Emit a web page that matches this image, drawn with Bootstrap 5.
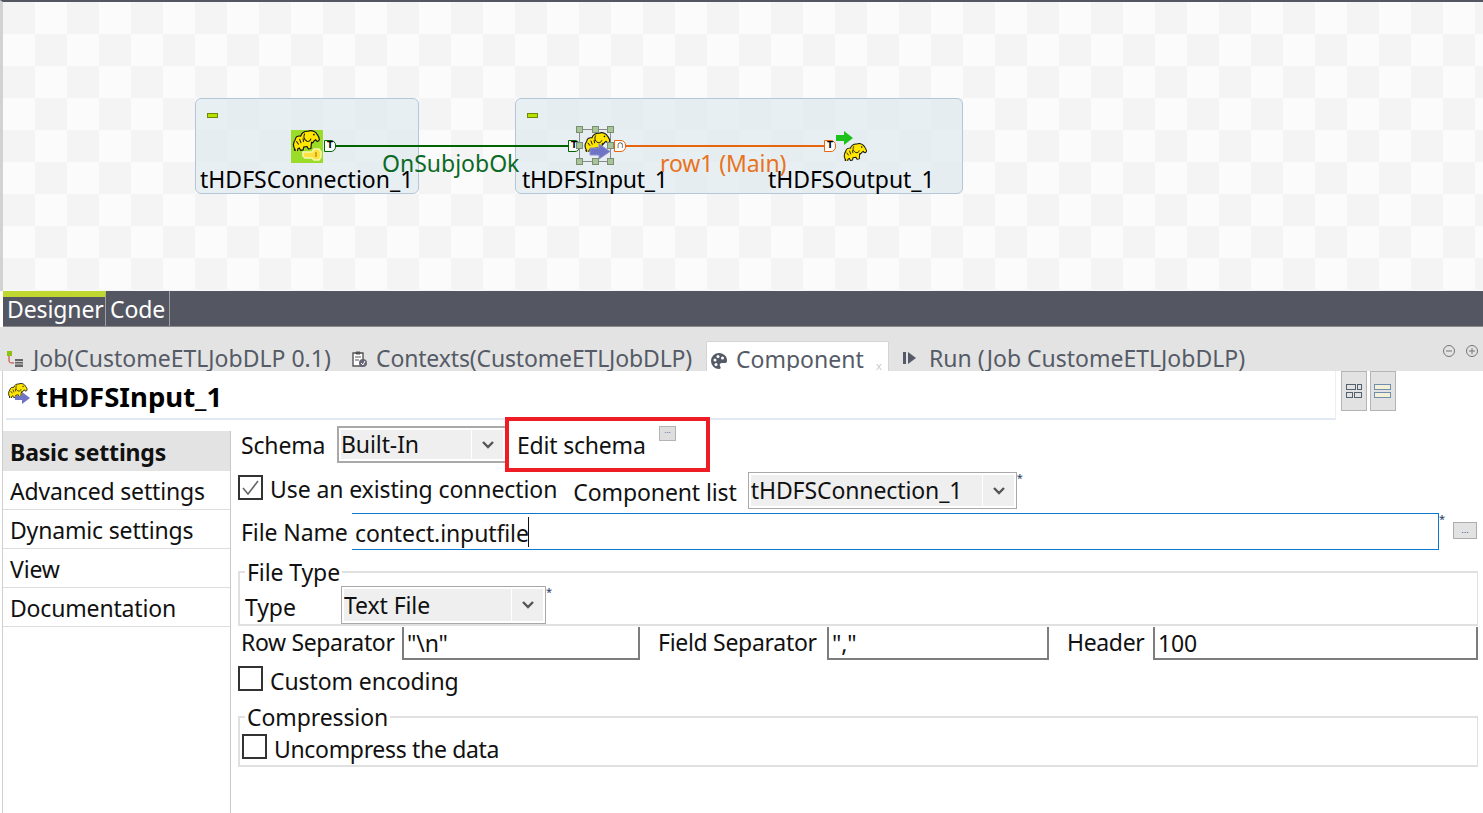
<!DOCTYPE html>
<html lang="en">
<head>
    <meta charset="UTF-8">
    <meta name="viewport" content="width=device-width, initial-scale=1">
    <title>tHDFSInput_1 - Component</title>
    <link href="https://cdn.jsdelivr.net/npm/bootstrap@5.3.2/dist/css/bootstrap.min.css" rel="stylesheet">
    <script src="https://cdn.jsdelivr.net/npm/bootstrap@5.3.2/dist/js/bootstrap.bundle.min.js"></script>
    <style>
        html, body { height: 813px; overflow: hidden; }
        body { font-family: "Noto Sans", "Open Sans", sans-serif; font-size: 23px; letter-spacing: -.1px; color: #111; background: #fff; }

        /* designer canvas */
        .job-canvas { position: relative; height: 291px; border-left: 3px solid #d2d2d2; border-top: 2px solid #545762;
            background: repeating-conic-gradient(#fbfbfb 0 25%, #f4f4f4 0 50%) 0 0 / 64px 64px; }
        .subjob { position: absolute; top: 96px; height: 96px; background: rgba(224, 234, 240, .72); border: 1px solid #b4c7d8; border-radius: 6px; }
        .subjob-a { left: 192px; width: 224px; }
        .subjob-b { left: 512px; width: 448px; }
        .collapse-mark { position: absolute; left: 11px; top: 14px; width: 11px; height: 5px; background: #b7e000; border: 1px solid #6f8a00; }
        .canvas-text { position: absolute; line-height: 30px; white-space: nowrap; letter-spacing: 0; }
        .node-name { top: 162px; color: #000; }
        .name-a { left: 197px; }
        .name-b { left: 519px; letter-spacing: -.25px; }
        .name-c { left: 765px; letter-spacing: -.05px; }
        .link-ok { top: 146px; left: 379px; color: #0b6a25; }
        .link-main { top: 146px; left: 657px; color: #e9731d; letter-spacing: -.1px; }
        .conn-line { position: absolute; top: 143px; height: 2px; }
        .conn-ok { left: 331px; width: 236px; background: #006400; }
        .conn-main { left: 616px; width: 206px; background: #e8650f; }
        .conn-port { position: absolute; top: 138px; width: 12px; height: 12px; background: #fff; border: 1.5px solid #006400; border-radius: 0 5px 5px 0; font: 700 11px/9px "Liberation Mono", monospace; letter-spacing: 0; text-align: center; color: #000; }
        .port-orange { border-color: #e8650f; }
        .port-a { left: 321px; }
        .port-b { left: 565px; }
        .port-c { left: 611px; }
        .port-d { left: 821px; }
        .node-icon { position: absolute; }
        .icon-conn { left: 288px; top: 128px; }
        .icon-input { left: 577px; top: 128px; }
        .icon-out-arrow { left: 833px; top: 129px; }
        .icon-out-hadoop { left: 840px; top: 140px; }
        .sel-box { position: absolute; left: 576px; top: 127px; width: 32px; height: 33px; border: 1px solid #8a8a8a; }
        .sel-handle { position: absolute; width: 7px; height: 7px; background: #a7c596; border: 1px solid #7d8d75; }
        .hx-1 { left: 573px; } .hx-2 { left: 589px; } .hx-3 { left: 604px; }
        .hy-1 { top: 124px; } .hy-2 { top: 140px; } .hy-3 { top: 156px; }

        /* Designer / Code strip */
        .editor-tabs { height: 36px; margin-left: 3px; background: #545762; color: #fff; border-bottom: 1px solid #8a8a8a; }
        .editor-tab { height: 35px; padding: 6px 3px 0 4px; line-height: 25px; border-right: 1px solid #a0a0a0; }
        .editor-tab.is-on { width: 103px; border-top: 6px solid #c0d72f; padding-top: 0; }
        .editor-tab.is-off { width: 64px; }

        /* view tabs */
        .view-tabs { position: relative; height: 44px; background: #e3e3e3; color: #555b66; overflow: hidden; padding-left: 7px; }
        .view-tab { height: 30px; margin-top: 14px; line-height: 34px; white-space: nowrap; letter-spacing: 0; }
        .view-tab.is-on { background: #fff; border: 1px solid #d4d4d4; border-bottom: 0; border-radius: 2px 2px 0 0; }
        .tab-ico { flex: none; margin-top: 10px; }
        .tab-1 { width: 344px; }
        .tab-2 { width: 355px; letter-spacing: -.15px; }
        .tab-3 { width: 183px; padding-left: 3px; }
        .tab-4 { margin-left: 13px; gap: 12px; }
        .tab-x { position: absolute; left: 876px; top: 34px; font-size: 11px; line-height: 10px; color: #ccc; }
        .view-ctl { position: absolute; top: 17px; left: 1441px; }

        /* title */
        .title-row { height: 60px; margin-left: 2px; padding-left: 3px; border-left: 1px solid #cfcfcf; }
        .title-box { width: 1330px; height: 49px; border-right: 1px solid #eee; border-bottom: 2px solid #e2e9f2; font-size: 27.5px; font-weight: 700; letter-spacing: 0; color: #000; line-height: 52px; }
        .title-ico { flex: none; margin-top: 8px; margin-right: 1px; }
        .layout-btn { width: 26px; height: 40px; margin-left: 5px; background: #e2e2e2; border: 1px solid #b4b4b4; }
        .layout-btn + .layout-btn { margin-left: 3px; }

        /* side list */
        .prop-main { height: 382px; margin-left: 2px; border-left: 1px solid #cfcfcf; }
        .side-list { width: 228px; flex: none; border-right: 1px solid #c8c8c8; border-radius: 0; }
        .side-list .list-group-item { height: 39px; padding: 0 0 0 7px; line-height: 40px; font-size: 23px; letter-spacing: -.17px; color: #111; border: 0; border-bottom: 1px solid #ddd; border-radius: 0; background: transparent; }
        .side-list .list-group-item.active { height: 40px; background: #e3e3e3; font-weight: 700; color: #111; line-height: 42px; border-bottom: 0; }

        /* form */
        .prop-form { position: relative; flex: 1; padding-left: 10px; margin-top: -5px; }
        .form-line { white-space: nowrap; }
        .field-label { line-height: 30px; }
        .combo.form-select { height: 37px; padding: 0 0 0 2px; font-size: 23px; letter-spacing: -.1px; line-height: 31px; color: #111; border: 1px solid #a9a9a9; border-radius: 0;
            box-shadow: inset 0 0 0 2px #fff;
            background-color: #efefef;
            background-image: url("data:image/svg+xml,%3Csvg xmlns='http://www.w3.org/2000/svg' width='12' height='8'%3E%3Cpath d='M1 1l5 5 5-5' fill='none' stroke='%23555' stroke-width='2.4'/%3E%3C/svg%3E"), linear-gradient(#fff, #fff);
            background-repeat: no-repeat;
            background-position: right 11px center, right 33px top;
            background-size: 12px 8px, 1px 100%; }
        .req-star { font-size: 11px; line-height: 12px; color: #1d3a66; align-self: flex-start; }
        .plain-input.form-control { height: 100%; padding: 0 0 0 3px; font-size: 23px; letter-spacing: -.1px; line-height: 28px; color: #111; border: 2px solid #7d7d7d; border-top: 0; border-radius: 0; box-shadow: none; background: #fff; }
        .file-input.form-control { height: 37px; padding: 2px 0 0 3px; font-size: 23px; letter-spacing: -.1px; color: #111; border: 1px solid #0a78d0; border-left: 0; border-radius: 0; box-shadow: none;
            background: linear-gradient(#111, #111) no-repeat 176px 3px / 1px 30px; }
        .dots-btn { width: 24px; height: 17px; padding: 0; background: #e2e2e2; border: 1px solid #adadad; border-radius: 0; font: 9px/10px "Liberation Sans", sans-serif; color: #2a4a80; }
        .dots-btn:hover { background: #e2e2e2; border-color: #adadad; color: #2a4a80; }
        .box-check.form-check-input { width: 25px; height: 25px; margin: 0; flex: none; border: 2px solid #333; border-radius: 0; background-color: #fff; box-shadow: none; float: none; }
        .box-check.form-check-input:checked { background-color: #fff; border-color: #333; background-size: 21px 21px;
            background-image: url("data:image/svg+xml,%3Csvg xmlns='http://www.w3.org/2000/svg' viewBox='0 0 21 21'%3E%3Cpath d='M3 11l5 6 10-13' fill='none' stroke='%23666' stroke-width='1.6'/%3E%3C/svg%3E"); }
        .group-box { min-width: 0; margin: 0; border: 2px solid #e0e0e0; border-right-width: 1px; border-radius: 0; }
        .group-box legend { float: none; width: auto; margin: 0 0 0 5px; padding: 0 2px; font-size: 23px; line-height: 22px; color: #111; }
        .annot-box { position: absolute; left: 274px; top: -9px; width: 205px; height: 55px; border: 4px solid #ee1c25; pointer-events: none; }
        .annot-btn { position: absolute; left: 428px; top: 0; width: 17px; height: 15px; background: #dedede; border: 1px solid #b4b4b4; font: 8px/8px "Liberation Sans", sans-serif; color: #2a4a80; text-align: center; }

        /* form line positions */
        .sch-line { height: 37px; }
        .sch-label { width: 96px; letter-spacing: -.15px; }
        .sch-combo.form-select { width: 170px; flex: none; border-width: 2px; }
        .sch-edit { margin-left: 10px; letter-spacing: -.2px; }
        .conn-row { height: 37px; margin-top: 9px; margin-left: -3px; align-items: center; }
        .conn-row .box-check { margin-top: -6px; }
        .conn-row .conn-label { margin-top: -4px; margin-left: 7px; }
        .conn-label { margin-left: 6px; }
        .comp-label { margin-left: 16px; margin-top: 3px; }
        .comp-combo.form-select { width: 269px; flex: none; margin-left: 11px; }
        .file-row { height: 37px; margin-top: 4px; align-items: center; }
        .file-label { width: 111px; flex: none; }
        .file-input.form-control { width: 1087px; flex: none; }
        .file-row .dots-btn { margin-left: 8px; margin-top: -3px; }
        .type-group { margin: 11px 5px 0 -3px; height: 65px; padding: 0; }
        .type-group .d-flex { margin-top: 3px; }
        .type-label { width: 96px; margin-left: 5px; margin-top: 6px; }
        .type-combo.form-select { width: 205px; flex: none; height: 38px; }
        .sep-row { height: 33px; margin-top: 1px; margin-right: 5px; align-items: stretch; }
        .sep-a { width: 161px; flex: none; letter-spacing: -.35px; }
        .sep-input-a.form-control { width: 238px; flex: none; }
        .sep-b { margin-left: 18px; width: 169px; flex: none; letter-spacing: -.3px; }
        .sep-input-b.form-control { width: 222px; flex: none; }
        .sep-c { margin-left: 18px; width: 86px; flex: none; letter-spacing: -.35px; }
        .sep-input-c.form-control { flex: 1; }
        .enc-row { height: 26px; margin-top: 7px; margin-left: -3px; align-items: center; }
        .enc-row .box-check { margin-top: -3px; }
        .enc-row .conn-label { margin-top: 1px; margin-left: 7px; }
        .comp-group { margin: 13px 5px 0 -3px; height: 61px; padding: 0; }
        .comp-group .d-flex { padding-left: 2px; margin-top: 6px; }
        .comp-group .conn-label { margin-left: 7px; letter-spacing: -.33px; }
    </style>
</head>
<body>

    <svg width="0" height="0" class="d-block">
        <defs>
            <symbol id="hadoop" viewBox="0 0 32 24">
                <g transform="rotate(-10 16 12)">
                    <path d="M2 20c-2-4-1-8 2-11 1-3 4-4 7-3 1-3 5-5 9-4 5-1 9 2 10 6 1 2 2 4 1 6-1 1-1 2-3 1l-1-2-2 1-2 2-1-1-1 3-1 4-3 0-1-3h-4l-1 3-3 0-1-3-2 1-1 3c-1 0-2-1-3-3z" fill="#ffe600" stroke="#111" stroke-width="1.3" stroke-linejoin="round"/>
                    <path d="M16 4c-2 2-3 6 1 9 2 1 4 0 5-2M5 11l2 4M9 9l1 5M13 9l0 4" fill="none" stroke="#111" stroke-width="1.1"/>
                    <circle cx="26" cy="7" r="1" fill="#111"/>
                </g>
            </symbol>
        </defs>
    </svg>

    <div class="job-canvas">
        <div class="subjob subjob-a"><span class="collapse-mark"></span></div>
        <div class="subjob subjob-b"><span class="collapse-mark"></span></div>

        <div class="conn-line conn-ok"></div>
        <div class="conn-line conn-main"></div>

        <!-- tHDFSConnection -->
        <svg class="node-icon icon-conn" width="32" height="33" viewBox="0 0 32 33">
            <rect width="32" height="33" fill="#9bdc28"/>
            <use href="#hadoop" x="1" y="0" width="28" height="21"/>
            <path d="M14 22h7l2-3h5l2 3v5l-2 3h-5l-2-2h-7l-2-2v-4z" fill="#ffe040" stroke="#f6f7a8" stroke-width="1.6"/>
            <path d="M25 22v5" stroke="#b99b00" stroke-width="1.5"/>
        </svg>
        <span class="conn-port port-a">T</span>
        <span class="conn-port port-b">T</span>

        <!-- tHDFSInput -->
        <span class="sel-box"></span>
        <svg class="node-icon icon-input" width="34" height="34" viewBox="0 0 34 34">
            <use href="#hadoop" x="3" y="2" width="28" height="20"/>
            <path d="M10 18h9v-4l11 7.500-11 7.500v-4H10z" fill="#6f74c4" stroke="#8d90d0"/>
        </svg>
        <span class="sel-handle hx-1 hy-1"></span>
        <span class="sel-handle hx-2 hy-1"></span>
        <span class="sel-handle hx-3 hy-1"></span>
        <span class="sel-handle hx-1 hy-2"></span>
        <span class="sel-handle hx-3 hy-2"></span>
        <span class="sel-handle hx-1 hy-3"></span>
        <span class="sel-handle hx-2 hy-3"></span>
        <span class="sel-handle hx-3 hy-3"></span>
        <span class="conn-port port-c port-orange">∩</span>
        <span class="conn-port port-d port-orange">T</span>

        <!-- tHDFSOutput -->
        <svg class="node-icon icon-out-arrow" width="18" height="15" viewBox="0 0 18 15">
            <path d="M0 4h8V0l9 7-9 7v-4H0z" fill="#1cc11c"/>
        </svg>
        <svg class="node-icon icon-out-hadoop" width="24" height="20" viewBox="0 0 32 24"><use href="#hadoop"/></svg>

        <span class="canvas-text node-name name-a">tHDFSConnection_1</span>
        <span class="canvas-text node-name name-b">tHDFSInput_1</span>
        <span class="canvas-text node-name name-c">tHDFSOutput_1</span>
        <span class="canvas-text link-ok">OnSubjobOk</span>
        <span class="canvas-text link-main">row1 (Main)</span>
    </div>

    <div class="editor-tabs d-flex">
        <div class="editor-tab is-on">Designer</div>
        <div class="editor-tab is-off">Code</div>
    </div>

    <div class="view-tabs d-flex">
        <div class="view-tab tab-1 d-flex gap-2">
            <svg class="tab-ico" width="18" height="17" viewBox="0 0 18 17">
                <rect x="0" y="0" width="5" height="5" fill="#8fbf10"/>
                <path d="M2 5v5c0 2 2 2 5 2" fill="none" stroke="#c0392b"/>
                <path d="M8 8h8v8H8z" fill="#666"/>
                <path d="M8 10.500h8M8 13h8" stroke="#e3e3e3" stroke-width=".8"/>
            </svg>
            <span>Job(CustomeETLJobDLP 0.1)</span>
        </div>
        <div class="view-tab tab-2 d-flex gap-2">
            <svg class="tab-ico" width="17" height="17" viewBox="0 0 17 17">
                <path d="M2 2h10v13H2z" fill="#fff" stroke="#555" stroke-width="1.4"/>
                <path d="M5 1h4v2H5zM4 6h6M4 9h4" fill="#555" stroke="#555"/>
                <circle cx="12" cy="12" r="4" fill="#667"/>
                <path d="M10 12l2 2 2-4" fill="none" stroke="#fff"/>
            </svg>
            <span>Contexts(CustomeETLJobDLP)</span>
        </div>
        <div class="view-tab tab-3 is-on d-flex gap-2">
            <svg class="tab-ico" width="18" height="18" viewBox="0 0 18 18">
                <path d="M9 1a8 8 0 1 0 0 16c2 0 2-2 1-3s0-3 2-3h3c2 0 2-2 2-3 0-4-4-7-8-7z" fill="#555b66"/>
                <circle cx="5" cy="8" r="1.500" fill="#fff"/><circle cx="8" cy="4.500" r="1.500" fill="#fff"/><circle cx="12.500" cy="6" r="1.500" fill="#fff"/><circle cx="6" cy="12.500" r="1.500" fill="#fff"/>
            </svg>
            <span>Component</span>
        </div>
        <div class="view-tab tab-4 d-flex">
            <svg class="tab-ico" width="15" height="14" viewBox="0 0 15 14">
                <path d="M1 1h3v12H1z" fill="#555b66"/><path d="M6 1l8 6-8 6z" fill="#555b66"/>
            </svg>
            <span>Run (Job CustomeETLJobDLP)</span>
        </div>
        <span class="tab-x">x</span>
        <svg class="view-ctl" width="38" height="14" viewBox="0 0 38 14" fill="none" stroke="#777">
            <circle cx="8" cy="7" r="5.500"/><path d="M5 7h6"/>
            <circle cx="31" cy="7" r="5.500"/><path d="M28 7h6M31 4v6"/>
        </svg>
    </div>

    <div class="title-row d-flex">
        <div class="title-box d-flex align-items-start gap-1">
            <svg class="title-ico" width="25" height="28" viewBox="0 0 25 28">
                <use href="#hadoop" x="0" y="4" width="23" height="15"/>
                <path d="M9 17h7v-4l8 6-8 6v-4H9z" fill="#6f74c4"/>
            </svg>
            <span>tHDFSInput_1</span>
        </div>
        <div class="layout-btn d-flex align-items-center justify-content-center">
            <svg width="16" height="14" viewBox="0 0 16 14" fill="none" stroke="#55606e">
                <rect x=".5" y=".5" width="9" height="5"/><rect x="11.500" y=".5" width="4" height="5"/>
                <rect x=".5" y="8.500" width="6" height="5"/><rect x="8.500" y="8.500" width="7" height="5"/>
            </svg>
        </div>
        <div class="layout-btn d-flex align-items-center justify-content-center">
            <svg width="18" height="14" viewBox="0 0 18 14" fill="#f4efd6" stroke="#6f8fb0">
                <rect x=".5" y=".5" width="16" height="5"/><rect x=".5" y="8.500" width="16" height="5"/>
            </svg>
        </div>
    </div>

    <div class="prop-main d-flex">
        <div class="list-group side-list">
            <div class="list-group-item active">Basic settings</div>
            <div class="list-group-item">Advanced settings</div>
            <div class="list-group-item">Dynamic settings</div>
            <div class="list-group-item">View</div>
            <div class="list-group-item">Documentation</div>
        </div>

        <div class="prop-form">
            <div class="annot-box"></div>

            <div class="form-line d-flex align-items-center sch-line">
                <span class="field-label sch-label">Schema</span>
                <select class="form-select combo sch-combo"><option>Built-In</option></select>
                <span class="field-label sch-edit">Edit schema</span>
                <span class="annot-btn">...</span>
            </div>

            <div class="form-line d-flex conn-row">
                <input class="form-check-input box-check" type="checkbox" checked>
                <span class="field-label conn-label">Use an existing connection</span>
                <span class="field-label comp-label">Component list</span>
                <select class="form-select combo comp-combo"><option>tHDFSConnection_1</option></select>
                <span class="req-star">*</span>
            </div>

            <div class="form-line d-flex file-row">
                <span class="field-label file-label">File Name</span>
                <input class="form-control file-input" type="text" value="contect.inputfile">
                <span class="req-star">*</span>
                <button class="btn dots-btn" type="button">...</button>
            </div>

            <fieldset class="group-box type-group">
                <legend>File Type</legend>
                <div class="d-flex">
                    <span class="field-label type-label">Type</span>
                    <select class="form-select combo type-combo"><option>Text File</option></select>
                    <span class="req-star">*</span>
                </div>
            </fieldset>

            <div class="form-line d-flex sep-row">
                <span class="field-label sep-a">Row Separator</span>
                <input class="form-control plain-input sep-input-a" type="text" value="&quot;\n&quot;">
                <span class="field-label sep-b">Field Separator</span>
                <input class="form-control plain-input sep-input-b" type="text" value="&quot;,&quot;">
                <span class="field-label sep-c">Header</span>
                <input class="form-control plain-input sep-input-c" type="text" value="100">
            </div>

            <div class="form-line d-flex enc-row">
                <input class="form-check-input box-check" type="checkbox">
                <span class="field-label conn-label">Custom encoding</span>
            </div>

            <fieldset class="group-box comp-group">
                <legend>Compression</legend>
                <div class="d-flex">
                    <input class="form-check-input box-check" type="checkbox">
                    <span class="field-label conn-label">Uncompress the data</span>
                </div>
            </fieldset>
        </div>
    </div>

</body>
</html>
